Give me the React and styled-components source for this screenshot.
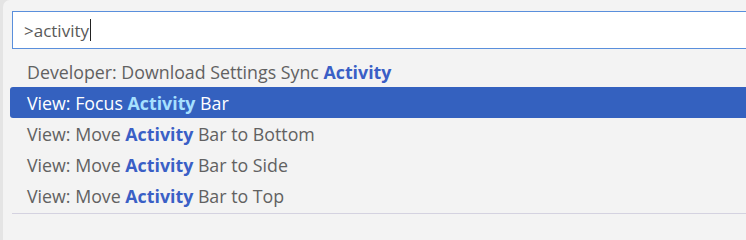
import React from "react";
import styled, { createGlobalStyle } from "styled-components";

const Global = createGlobalStyle`
  html, body { margin: 0; padding: 0; background: #e4e4e4; overflow: hidden; }
  #root { min-height: 100vh; display: flex; }
`;

const Page = styled.div`
  flex: 1;
  display: flex;
  min-height: 100vh;
  padding-left: 3px;
  box-sizing: border-box;
`;

const Widget = styled.div`
  flex: 1;
  background: #f3f3f3;
  border-top-left-radius: 7px;
  padding-top: 11px;
  display: flex;
  flex-direction: column;
  font-family: "Open Sans", "Noto Sans", sans-serif;
  overflow: hidden;
`;

const InputBox = styled.div`
  margin-left: 9px;
  height: 38px;
  flex-shrink: 0;
  box-sizing: border-box;
  border: 1px solid #5a8fdc;
  border-right: none;
  background: #fff;
  display: flex;
  align-items: center;
  padding-left: 11px;
  font-size: 17px;
  color: #595959;
`;

const Caret = styled.span`
  display: inline-block;
  width: 1px;
  height: 22px;
  background: #222;
  margin-left: 1px;
`;

const List = styled.div`
  margin-top: 7px;
  display: flex;
  flex-direction: column;
`;

const Row = styled.div`
  height: 31px;
  margin-left: 7px;
  padding-left: 17px;
  display: flex;
  align-items: center;
  font-size: 17.8px;
  white-space: nowrap;
  border-radius: 3px 0 0 3px;
  color: ${(p) => (p.$selected ? "#fff" : "#616161")};
  background: ${(p) => (p.$selected ? "#3461bf" : "transparent")};
`;

const Plain = styled.span`
  white-space: pre;
`;

const Hl = styled.b`
  font-weight: 700;
  color: ${(p) => (p.$selected ? "#a6e0ff" : "#3a5fc6")};
  white-space: pre;
`;

const Separator = styled.div`
  margin: 2px 0 0 9px;
  height: 1px;
  background: #d4d2e0;
`;

const items = [
  ["Developer: Download Settings Sync ", "Activity", ""],
  ["View: Focus ", "Activity", " Bar"],
  ["View: Move ", "Activity", " Bar to Bottom"],
  ["View: Move ", "Activity", " Bar to Side"],
  ["View: Move ", "Activity", " Bar to Top"],
];

export default function App() {
  return (
    <>
      <Global />
      <Page>
        <Widget>
          <InputBox>
            &gt;activity
            <Caret />
          </InputBox>
          <List>
            {items.map(([a, h, b], i) => (
              <Row key={i} $selected={i === 1}>
                <Plain>{a}</Plain>
                <Hl $selected={i === 1}>{h}</Hl>
                <Plain>{b}</Plain>
              </Row>
            ))}
          </List>
          <Separator />
        </Widget>
      </Page>
    </>
  );
}
